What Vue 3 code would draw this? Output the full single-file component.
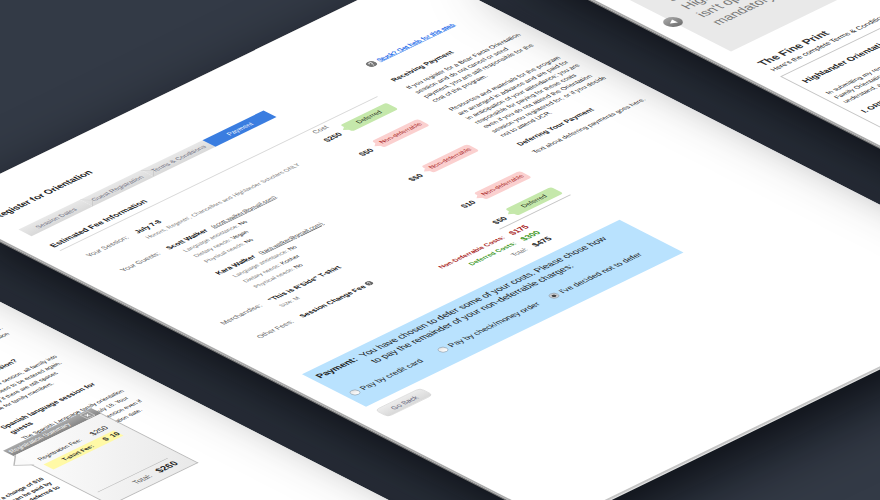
<script setup>
import { ref } from 'vue'

const steps = ['Session Dates', 'Guest Registration', 'Terms & Conditions', 'Payment']

const fees = [
  {
    label: 'Your Session:',
    name: 'July 7-8',
    notes: [{ key: "Honors, Regents', Chancellors and Highlander Scholars ONLY" }],
    cost: '$250',
    status: 'Deferred'
  },
  {
    label: 'Your Guests:',
    name: 'Scott Walker',
    email: 'scott.walker@gmail.com',
    notes: [
      { key: 'Language assistance:', value: 'No' },
      { key: 'Dietary needs:', value: 'Vegan' },
      { key: 'Physical needs:', value: 'No' }
    ],
    cost: '$50',
    status: 'Non-deferrable',
    tight: true
  },
  {
    label: '',
    name: 'Kara Walker',
    email: 'kara.walker@gmail.com',
    notes: [
      { key: 'Language assistance:', value: 'No' },
      { key: 'Dietary needs:', value: 'Kosher' },
      { key: 'Physical needs:', value: 'No' }
    ],
    cost: '$50',
    status: 'Non-deferrable'
  },
  {
    label: 'Merchandise:',
    name: '"This is R\'Side" T-shirt',
    notes: [{ key: 'Size: M' }],
    cost: '$10',
    status: 'Non-deferrable'
  },
  {
    label: 'Other Fees:',
    name: 'Session Change Fee',
    help: true,
    notes: [],
    cost: '$50',
    status: 'Deferred'
  }
]

const options = [
  { id: 'card', text: 'Pay by credit card' },
  { id: 'check', text: 'Pay by check/money order' },
  { id: 'none', text: "I've decided not to defer" }
]
const choice = ref('none')
</script>

<template>
  <main class="scene">
    <div class="plane">
      <section class="sheet sheet-guests">
        <div class="columns">
          <div class="side-note">
            <p>There is a change of $10<br />The change can be paid by<br />card, or be deferred to</p>
          </div>
          <aside class="help help-guests">
            <p>You can add guests to your session here.<br />See the family orientation for information</p>
            <h3>Changing your session?</h3>
            <p>
              If you change your session, all family into<br />
              everyone will need to be entered again,<br />
              guests only if there are still spaces<br />
              available for family members.
            </p>
            <h3 class="wide">Spanish language session for<br />guests</h3>
            <p class="spanish">
              The Spanish Language family orientation<br />
              session is offered only on July 18. Your<br />
              your guests may join that session even if<br />
              it is not on your own orientation date.
            </p>
          </aside>
        </div>
        <div class="popup">
          <div class="popup-head">
            <span>Registration Summary</span>
            <button class="popup-close" type="button" aria-label="Close">
              <svg viewBox="0 0 14 14" width="14" height="14"><path d="M4 4l6 6M10 4l-6 6" stroke="#fff" stroke-width="1.6" /></svg>
            </button>
          </div>
          <svg class="popup-tip" viewBox="0 0 24 40" width="24" height="40">
            <path d="M24 1 L2 20 L24 39" fill="#fafafa" stroke="#b9b9b9" stroke-width="2" />
          </svg>
          <dl class="popup-body">
            <div><dt>Registration Fee:</dt><dd>$250</dd></div>
            <div class="marked"><dt>T-shirt Fee:</dt><dd>$&nbsp; 10</dd></div>
            <div class="popup-total"><dt>Total:</dt><dd>$260</dd></div>
          </dl>
        </div>
      </section>

      <section class="sheet sheet-payment">
        <div class="columns">
          <div class="content">
            <h1>Register for Orientation</h1>
            <nav class="steps">
              <a v-for="(s, i) in steps" :key="s" href="#" :class="{ active: i === 3 }">{{ s }}</a>
            </nav>
            <h2>Estimated Fee Information</h2>
            <table class="fees">
              <thead>
                <tr><th class="c-label"></th><th></th><th class="c-cost">Cost</th><th class="c-tag"></th></tr>
              </thead>
              <tbody>
                <tr v-for="f in fees" :key="f.name" :class="{ tight: f.tight }">
                  <td class="c-label">{{ f.label }}</td>
                  <td class="c-info">
                    <div class="name">
                      <strong>{{ f.name }}</strong>
                      <a v-if="f.email" href="#">({{ f.email }})</a>
                      <svg v-if="f.help" viewBox="0 0 14 14" width="12" height="12">
                        <circle cx="7" cy="7" r="7" fill="#666" />
                        <path d="M4.8 5.6c0-3 4.4-3 4.4-.4 0 1.600-2.100 1.600-2.100 3.200M7.100 9.800v1.500" fill="none" stroke="#fff" stroke-width="1.500" />
                      </svg>
                    </div>
                    <div v-for="n in f.notes" :key="n.key" class="note" :class="{ inset: n.value }">
                      {{ n.key }} <b v-if="n.value">{{ n.value }}</b>
                    </div>
                  </td>
                  <td class="c-cost">{{ f.cost }}</td>
                  <td class="c-tag">
                    <span class="tag" :class="{ deferred: f.status === 'Deferred' }">{{ f.status }}</span>
                  </td>
                </tr>
              </tbody>
            </table>
            <div class="rule"></div>
            <dl class="totals">
              <dt class="red">Non-Deferrable Costs:</dt><dd class="red">$175</dd>
              <dt class="green">Deferred Costs:</dt><dd class="green">$300</dd>
              <dt>Total:</dt><dd>$475</dd>
            </dl>
            <form class="payment" @submit.prevent>
              <div class="ask">
                <strong>Payment:</strong>
                <p>
                  You have chosen to defer some of your costs. Please chose how<br />
                  to pay the remainder of your non-deferrable charges:
                </p>
              </div>
              <div class="options">
                <label v-for="o in options" :key="o.id">
                  <input v-model="choice" type="radio" name="payment" :value="o.id" />{{ o.text }}
                </label>
              </div>
            </form>
            <button class="back" type="button">Go Back</button>
          </div>
          <aside class="help help-payment">
            <a class="stuck" href="#">
              <svg viewBox="0 0 16 16" width="16" height="16">
                <circle cx="8" cy="8" r="8" fill="#777" />
                <path d="M5.500 6.400c0-3.400 5-3.400 5-.4 0 1.900-2.400 1.900-2.400 3.600M8.100 11v1.800" fill="none" stroke="#fff" stroke-width="1.700" />
              </svg>
              <span>Stuck? Get help for this step</span>
            </a>
            <h3>Receiving Payment</h3>
            <p>
              If you register for a Bear Facts Orientation<br />
              session and do not cancel or send<br />
              payment, you are still responsible for the<br />
              cost of the program.
            </p>
            <p>
              Resources and materials for the program<br />
              are arranged in advance and are paid for<br />
              in anticipation of your attendance; you are<br />
              responsible for paying for these costs<br />
              even if you do not attend the Orientation<br />
              session you registered for, or if you decide<br />
              not to attend UCR.
            </p>
            <h3>Deferring Your Payment</h3>
            <p>Text about deferring payments goes here.</p>
          </aside>
        </div>
      </section>

      <section class="sheet sheet-terms">
        <div class="quote">
          <button class="prev" type="button" aria-label="Previous">
            <svg viewBox="0 0 28 28" width="28" height="28"><path d="M18 8v12L8 14z" fill="#fff" /></svg>
          </button>
          <p>Session at<br />Highlander<br />isn't optional,<br />mandatory</p>
        </div>
        <h2>The Fine Print</h2>
        <p class="lead">Here's the complete Terms &amp; Conditions</p>
        <article class="terms">
          <h3>Highlander Orientation</h3>
          <p>In submitting my request for<br />Family Orientation, I agree that I<br />understand, accept and agree</p>
          <h4>I. ORIENTATION</h4>
          <p class="clause">A. Payment</p>
        </article>
      </section>
    </div>
  </main>
</template>

<style>
body {
  margin: 0;
}
</style>

<style scoped>
.scene {
  position: relative;
  height: 100vh;
  overflow: hidden;
  background: #333a46;
  font-family: 'Liberation Sans', Arial, sans-serif;
  color: #222;
}
.plane {
  position: absolute;
  top: 0;
  left: 0;
  transform: matrix(0.5, -0.243, 0.5, 0.255, 0, 0);
  transform-origin: 0 0;
}
h1, h2, h3, h4, p, dl, dd {
  margin: 0;
}
.sheet {
  position: absolute;
  top: 349px;
  width: 970px;
  min-height: 1245px;
  background: #fff;
  border-left: 4px solid #aaa;
  border-bottom: 4px solid #c4c4c4;
  box-shadow: -3px 0 0 #7c7c7c, 0 3px 0 #e2e2e2, -42px 55px 110px rgba(2, 5, 10, 0.82);
}
.sheet-guests {
  left: -1580px;
}
.sheet-payment {
  left: -484px;
}
.sheet-terms {
  left: 605px;
}
.columns {
  display: grid;
  grid-template-columns: 635px 1fr;
  column-gap: 45px;
  padding: 72px 0 0 38px;
}

/* payment sheet */
h1 {
  font-size: 17px;
  line-height: 24px;
}
.steps {
  display: grid;
  grid-template-columns: repeat(4, 1fr);
  width: 490px;
  margin-top: 34px;
}
.steps a {
  position: relative;
  padding-top: 2px;
  font-size: 12px;
  line-height: 24px;
  text-align: center;
  text-decoration: none;
  color: #6f6f80;
  background: linear-gradient(#e8e8e8, #d9d9d9);
}
.steps a + a:not(.active)::before {
  content: '';
  position: absolute;
  top: 4px;
  left: -9px;
  width: 17px;
  height: 17px;
  border-top: 1px solid #c6c6c6;
  border-right: 1px solid #c6c6c6;
  transform: rotate(45deg);
}
.steps .active {
  background: #3a7de0;
  color: #fff;
}
h2 {
  font-size: 15px;
  line-height: 24px;
}
.content h2 {
  margin-top: 28px;
  padding-bottom: 4px;
  border-bottom: 2px solid #d8d8d8;
}
.fees {
  width: 100%;
  border-collapse: collapse;
  table-layout: fixed;
}
.fees th,
.fees td {
  padding: 2px 0 18px;
  font-size: 13px;
  line-height: 22px;
  font-weight: normal;
  text-align: left;
  vertical-align: top;
}
.fees th {
  padding-bottom: 6px;
  line-height: 16px;
  color: #666;
}
.fees tr.tight td {
  padding-bottom: 12px;
}
.fees tr:last-child td {
  padding-bottom: 6px;
}
.fees tbody .c-label,
.fees thead .c-label {
  width: 97px;
  text-align: right;
  color: #666;
}
.fees td.c-info {
  padding-left: 17px;
}
.name strong {
  color: #111;
}
.name a {
  margin-left: 10px;
  font-size: 11px;
  color: #444;
}
.name svg {
  margin-left: 4px;
  vertical-align: -1px;
}
.note {
  font-size: 11px;
  line-height: 21px;
  color: #777;
}
.note.inset {
  padding-left: 12px;
}
.note b {
  font-weight: normal;
  color: #222;
}
.fees .c-cost {
  width: 60px;
  text-align: right;
}
.fees td.c-cost {
  font-size: 14px;
  font-weight: bold;
}
.fees .c-tag {
  width: 112px;
}
.tag {
  position: relative;
  display: block;
  margin: -6px 4px 0 16px;
  border-radius: 5px;
  background: #fbd0cf;
  color: #a82020;
  font-size: 12px;
  line-height: 25px;
  text-align: center;
}
.tag::before {
  content: '';
  position: absolute;
  top: 7px;
  left: -7px;
  border: 6px solid transparent;
  border-left-width: 0;
  border-right: 8px solid #fbd0cf;
}
.tag.deferred {
  background: #c5e8ab;
  color: #1c2614;
}
.tag.deferred::before {
  border-right-color: #c5e8ab;
}
.rule {
  width: 142px;
  height: 2px;
  margin-left: auto;
  background: #c4c4c4;
}
.totals {
  display: grid;
  grid-template-columns: 482px 1fr;
  column-gap: 13px;
  padding-top: 7px;
  font-size: 12px;
  line-height: 23px;
}
.totals dt {
  text-align: right;
  color: #666;
}
.totals dd {
  font-size: 15px;
  font-weight: bold;
}
.totals .red {
  color: #a81c22;
  font-weight: bold;
}
.totals .green {
  color: #3b971c;
  font-weight: bold;
}
.payment {
  margin-top: 21px;
  padding: 10px 10px 28px;
  background: #b9e2fe;
}
.ask {
  display: grid;
  grid-template-columns: 87px 1fr;
  font-size: 17px;
  line-height: 23px;
  white-space: nowrap;
}
.options {
  display: grid;
  grid-template-columns: 176px 222px 1fr;
  margin-top: 20px;
}
.options label {
  display: flex;
  align-items: center;
  gap: 6px;
  font-size: 15px;
  line-height: 24px;
  white-space: nowrap;
}
.options input {
  appearance: none;
  width: 15px;
  height: 15px;
  margin: 0;
  border: 1px solid #8d9aa5;
  border-radius: 50%;
  background: linear-gradient(#e4e4e4, #fff);
}
.options input:checked {
  background: radial-gradient(#444 0 30%, #c9ccd0 42%);
}
.back {
  width: 91px;
  height: 27px;
  margin: 15px 0 0 2px;
  padding: 2px 0 0;
  border: 1px solid #cfcfcf;
  border-radius: 8px;
  background: linear-gradient(#ececec, #d9d9d9);
  color: #66667c;
  font: 13px 'Liberation Sans', Arial, sans-serif;
}

/* help column */
.help {
  font-size: 12px;
  line-height: 17px;
  color: #222;
  white-space: nowrap;
}
.help-payment {
  padding: 3px 0 0 2px;
}
.stuck {
  display: flex;
  align-items: center;
  gap: 5px;
  margin: 58px 0 35px 4px;
  line-height: 18px;
  color: #1767ea;
  -webkit-text-stroke: 0.4px #1767ea;
}
.help h3 {
  font-size: 13px;
  line-height: 20px;
  color: #222;
}
.help p {
  margin-top: 12px;
}
.help p + p {
  margin-top: 17px;
}
.help p + h3 {
  margin-top: 16px;
}

/* guests sheet */
.help-guests {
  padding-top: 218px;
  font-size: 11px;
}
.help-guests p + h3 {
  margin-top: 44px;
}
.help-guests p + h3.wide {
  margin-top: 24px;
  line-height: 18px;
}
.help-guests .spanish {
  margin-top: 5px;
  line-height: 19px;
}
.side-note {
  align-self: end;
  padding: 0 14px 0 0;
  margin-bottom: -72px;
  font-size: 11px;
  font-weight: bold;
  line-height: 16px;
  text-align: right;
}
.popup {
  position: absolute;
  top: 559px;
  left: 674px;
  width: 176px;
}
.popup-head {
  display: flex;
  align-items: center;
  justify-content: space-between;
  padding: 0 10px 0 4px;
  background: linear-gradient(#aaa, #858585);
  color: #fff;
  font-size: 12px;
  line-height: 21px;
}
.popup-close {
  display: flex;
  padding: 0;
  border: 1px solid #ddd;
  background: #999;
}
.popup-tip {
  position: absolute;
  top: 20px;
  left: -20px;
  z-index: 1;
}
.popup-body {
  padding: 22px 20px 8px 12px;
  border: 2px solid #b9b9b9;
  border-top: 0;
  background: linear-gradient(135deg, #fdfdfd, #e9e9e9);
  font-size: 11px;
}
.popup-body div {
  display: grid;
  grid-template-columns: 88px 1fr;
  align-items: center;
  column-gap: 14px;
  line-height: 20px;
}
.popup-body dt {
  text-align: right;
}
.popup-body dd {
  font-size: 14px;
  text-align: right;
}
.popup-body .marked {
  margin-top: 4px;
  background: #fff9a6;
  font-weight: bold;
}
.popup-body .marked dd {
  font-size: 13px;
}
.popup-body .popup-total {
  margin-top: 88px;
  padding-top: 5px;
  border-top: 1px solid #aaa;
  line-height: 24px;
}
.popup-total dt {
  font-size: 14px;
  color: #555;
}
.popup-total dd {
  font-size: 17px;
  font-weight: bold;
}

/* terms sheet */
.quote {
  display: flex;
  align-items: flex-end;
  min-height: 411px;
  margin-left: 36px;
  padding-bottom: 57px;
  background: #e9e9e9;
  font-size: 24px;
  line-height: 31px;
  color: #777;
}
.prev {
  display: flex;
  width: 28px;
  height: 28px;
  margin: 0 26px 45px -14px;
  padding: 0;
  border: 0;
  border-radius: 50%;
  background: linear-gradient(#a5a5a5, #707070);
}
.sheet-terms h2 {
  margin: 40px 0 0 40px;
  font-size: 20px;
  line-height: 28px;
  color: #333;
}
.lead {
  margin-left: 40px;
  font-size: 13px;
  line-height: 20px;
}
.terms {
  min-height: 300px;
  margin: 10px 30px 0 36px;
  padding: 22px 12px;
  border: 2px solid #c4c4c4;
  font-size: 12px;
  line-height: 17px;
  color: #222;
}
.terms h3 {
  margin-bottom: 28px;
  font-size: 16px;
  line-height: 20px;
  color: #222;
}
.terms h4 {
  margin: 18px 0 16px;
  font-size: 14px;
  line-height: 20px;
}
.clause {
  padding-left: 14px;
}
</style>
